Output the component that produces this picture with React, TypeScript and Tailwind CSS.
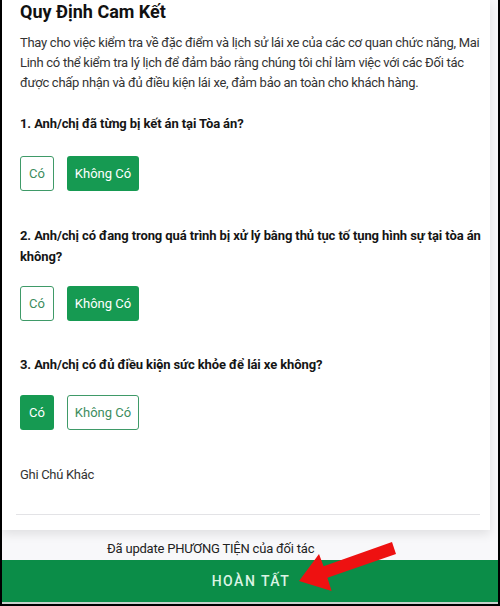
import React from 'react';

const font = { fontFamily: 'Roboto, "Noto Sans", sans-serif' };

type Choice = 'yes' | 'no';

const questions: { lines: string[]; picked: Choice; cls: string; btnCls: string }[] = [
  {
    lines: ['1. Anh/chị đã từng bị kết án tại Tòa án?'],
    picked: 'no',
    cls: 'mt-[21px] leading-[20px]',
    btnCls: 'mt-[22px]',
  },
  {
    lines: ['2. Anh/chị có đang trong quá trình bị xử lý bằng thủ tục tố tụng hình sự tại tòa án', 'không?'],
    picked: 'no',
    cls: 'mt-[34px] leading-[21px]',
    btnCls: 'mt-[19px]',
  },
  {
    lines: ['3. Anh/chị có đủ điều kiện sức khỏe để lái xe không?'],
    picked: 'yes',
    cls: 'mt-[34px] leading-[20px]',
    btnCls: 'mt-[20px]',
  },
];

function OptionButton({ label, active, wide }: { label: string; active: boolean; wide?: boolean }) {
  const base = `flex h-[35px] items-center justify-center rounded-[3px] text-[13px] ${wide ? 'w-[72px]' : 'w-[34px]'}`;
  return active ? (
    <div className={`${base} bg-[#169a52] text-white`}>{label}</div>
  ) : (
    <div className={`${base} border border-[#3f9a68] text-[#3d8d5e]`}>{label}</div>
  );
}

export default function App() {
  return (
    <div
      className="relative flex h-[606px] w-[500px] flex-col overflow-hidden border-x-2 border-b-2 border-black bg-[#f8f8fa]"
      style={font}
    >
      {/* main card */}
      <div className="w-[488px] bg-white pb-[15px] pl-[18px] pr-[4px] shadow-[0_4px_10px_rgba(0,0,0,0.10)]">
        <h1 className="text-[18px] font-bold leading-[23px] text-[#111]">Quy Định Cam Kết</h1>
        <p className="mt-[10px] whitespace-nowrap text-[13px] leading-[20px] tracking-[-0.28px] text-[#333]">
          Thay cho việc kiểm tra về đặc điểm và lịch sử lái xe của các cơ quan chức năng, Mai
          <br />
          Linh có thể kiểm tra lý lịch để đảm bảo rằng chúng tôi chỉ làm việc với các Đối tác
          <br />
          được chấp nhận và đủ điều kiện lái xe, đảm bảo an toàn cho khách hàng.
        </p>

        {questions.map((q) => (
          <div key={q.lines[0]}>
            <div className={`whitespace-nowrap text-[13px] font-bold tracking-[-0.1px] text-[#151515] ${q.cls}`}>
              {q.lines.map((l) => (
                <div key={l}>{l}</div>
              ))}
            </div>
            <div className={`flex gap-[13px] ${q.btnCls}`}>
              <OptionButton label="Có" active={q.picked === 'yes'} />
              <OptionButton label="Không Có" active={q.picked === 'no'} wide />
            </div>
          </div>
        ))}

        <div className="mt-[35px] text-[13px] leading-[20px] tracking-[-0.3px] text-[#333]">Ghi Chú Khác</div>
        <div className="ml-[-4px] mr-[6px] mt-[29px] h-px bg-[#e3e3e6]" />
      </div>

      <div className="flex h-[30px] items-end pb-[1px] pl-[105px] text-[13px] leading-[20px] tracking-[-0.2px] text-[#222]">
        Đã update PHƯƠNG TIỆN của đối tác
      </div>

      <div className="flex h-[42px] items-center justify-center bg-[#0b8d48] pl-[2px] text-[14px] font-medium tracking-[1.5px] text-[#dcf4e4]">
        HOÀN TẤT
      </div>
      <div className="h-[2px] bg-[#c9cfcb]" />

      {/* red annotation arrow */}
      <svg className="pointer-events-none absolute left-0 top-0" width="500" height="606" viewBox="0 0 500 606">
        <polygon
          fill="#ee1111"
          points="297,581 317,554 321.6,566.3 390,542 394,554 325.4,577.7 329.6,591"
        />
      </svg>
    </div>
  );
}
